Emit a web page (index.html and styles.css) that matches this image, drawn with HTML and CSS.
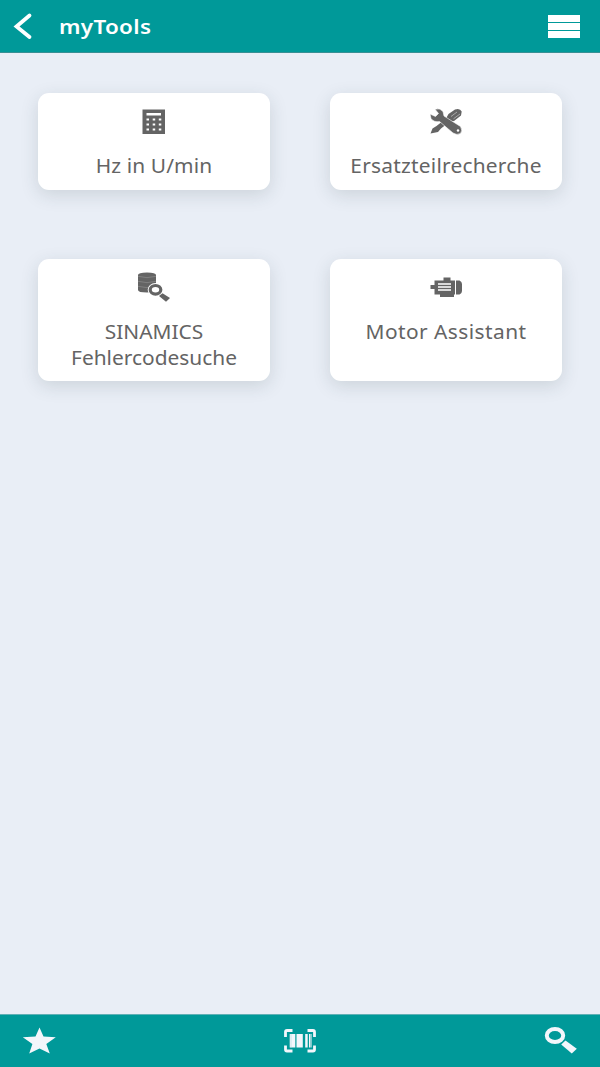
FILE: index.html
```
<!DOCTYPE html>
<html lang="de">
<head>
<meta charset="utf-8">
<title>myTools</title>
<link rel="stylesheet" href="styles.css">
</head>
<body>
<header class="topbar">
  <svg class="back" viewBox="0 0 20 28"><path d="M16.500 3.500 3.500 14.500 16.500 25"/></svg>
  <h1 class="title">myTools</h1>
  <div class="menu"><span class="line"></span><span class="line"></span><span class="line"></span></div>
</header>
<main class="tools">
  <section class="card">
    <svg class="icon" viewBox="0 0 34 32">
      <path fill-rule="evenodd" d="M5.500 4.500h22.500v24.500h-22.500zM9.500 8v2.500h14.500v-2.500zM9.500 13.500v2h2.500v-2zM15.700 13.500v2h2.500v-2zM21.800 13.500v2h2.500v-2zM9.500 18.500v2h2.500v-2zM15.700 18.500v2h2.500v-2zM21.800 18.500v2h2.500v-2zM9.500 23.500v2h2.500v-2zM15.700 23.500v2h2.500v-2zM21.800 23.500v2h2.500v-2z"/>
    </svg>
    <p class="label">Hz in U/min</p>
  </section>
  <section class="card">
    <svg class="icon" viewBox="0 0 34 32">
      <path d="M1.500 28.500 3.500 23.500 7.500 21 17 13.500 19.500 9 26 4.500Q31 2.800 32.700 6.500L32 10.500 25 16 21 16.500 12 23.500 9 27Z"/>
      <path class="cut" d="M22 11.500 28 7M24.500 13.800 31 9"/>
      <path class="edge" d="M6 4.200Q11 2.500 14 6.500L15 11 31.500 21.500Q34 25.500 31.500 28.500Q28 30.500 24 28L10.500 16.500Q5 17.500 2 13.500L1 9 6.500 11.500 9.500 8.500Z"/>
      <circle class="hole" cx="29" cy="25.500" r="1.200"/>
    </svg>
    <p class="label label-parts">Ersatzteilrecherche</p>
  </section>
  <section class="card card-tall">
    <svg class="icon" viewBox="0 0 34 32">
      <path d="M1 4Q1 1.500 10 1.500T19 4V19Q19 21.500 10 21.500T1 19Z"/>
      <path class="rings" d="M1 5.300Q10 8 19 5.300M1 10.300Q10 13 19 10.300M1 15.300Q10 18 19 15.300"/>
      <ellipse class="halo" cx="18.500" cy="18.800" rx="7.800" ry="6.800"/>
      <ellipse class="lens" cx="18.500" cy="18.800" rx="5.300" ry="4.300"/>
      <path d="m25.500 22.200 7.500 4.800-4 3.800-7-5.800z"/>
    </svg>
    <p class="label label-search">SINAMICS<br>Fehlercodesuche</p>
  </section>
  <section class="card card-tall">
    <svg class="icon" viewBox="0 0 34 32">
      <path d="M1.500 14h4V9.500h9V6.500h7v3H26v14h-1v2.500H11v-2.500H5.500V18h-4zM27 9.500h3.500Q33 10.500 33 13v7Q33 22.500 30.500 23.500H27z"/>
      <path class="fins" d="M9 13h13M9 16h13M9 19h13"/>
    </svg>
    <p class="label label-motor">Motor Assistant</p>
  </section>
</main>
<footer class="bottombar">
  <svg class="nav" viewBox="0 0 34 32"><path d="m17.500 2.500 4 9 12.300.7-9.500 6.900 3.500 9.400-10.300-5-10.300 5 3.200-9.400L.8 12.200l12.700-.7z"/></svg>
  <svg class="nav" viewBox="0 0 34 32">
    <path class="frame" d="M2.500 12V7Q2.500 5.500 4 5.500h5.500M24.500 5.500H30q1.500 0 1.500 1.500v5M2.500 20.500v4Q2.500 26 4 26h5.500M24.500 26H30q1.500 0 1.500-1.500v-4"/>
    <path d="M6.700 9h5.600v13.500H6.700zM13.500 9h6.300v13.500h-6.300zM22.200 9h2.500v13.500h-2.500zM26 9h1.600v13.500H26z"/>
    <path class="stripe" d="M8 9v13.500M28.500 9v13.500"/>
  </svg>
  <svg class="nav" viewBox="0 0 34 32"><ellipse class="ring" cx="11" cy="10.500" rx="8.200" ry="6.600"/><path d="m21.500 15.500 11.300 8.200-5 4.800-10.600-9z"/></svg>
</footer>
</body>
</html>
```
FILE: styles.css
```
* { box-sizing: border-box; }
body {
  margin: 0;
  height: 1067px;
  display: flex;
  flex-direction: column;
  background: #e9eef6;
  color: #646464;
  font-family: "Noto Sans", sans-serif;
  overflow: hidden;
}
.topbar {
  height: 53px;
  flex: none;
  display: flex;
  align-items: center;
  padding: 0 20.500px 0 13px;
  background: #009999;
  border-bottom: 1px solid #388f94;
  color: #fff;
}
.back {
  width: 20px;
  height: 28px;
  fill: none;
  stroke: #fff;
  stroke-width: 3.800;
  stroke-linecap: round;
}
.title {
  margin: 0 auto 0 25.500px;
  font-size: 20px;
  font-weight: 600;
  line-height: 28px;
  letter-spacing: .3px;
  transform: translateY(.5px) scaleX(1.12);
  transform-origin: left;
}
.menu {
  display: grid;
  gap: 1px;
  width: 32px;
}
.line {
  height: 7px;
  background: #fff;
}
.tools {
  flex: 1;
  display: grid;
  grid-template-columns: 232px 232px;
  column-gap: 60.500px;
  row-gap: 69px;
  align-content: start;
  padding: 40px 0 0 37.500px;
}
.card {
  height: 96.500px;
  padding-top: 12px;
  border-radius: 11px;
  background: #fff;
  box-shadow: 0 5px 18px rgba(40, 60, 70, .15);
  text-align: center;
}
.card-tall { height: 122.500px; }
.icon {
  display: block;
  width: 34px;
  height: 32px;
  margin: 0 auto;
  fill: #646464;
}
.label {
  margin: 16px 0 0;
  font-size: 19px;
  line-height: 26px;
  letter-spacing: .1px;
  white-space: nowrap;
  transform: scaleX(1.1);
}
.label-parts { letter-spacing: .2px; }
.label-search { letter-spacing: 0; }
.label-motor { letter-spacing: .4px; }
.cut { stroke: #aaa; stroke-width: 1; }
.edge { stroke: #fff; stroke-width: .6; }
.hole { fill: #fff; }
.rings { fill: none; stroke: #8c8c8c; stroke-width: .7; }
.halo { fill: #fff; }
.lens { fill: #fff; stroke: #646464; stroke-width: 3.200; }
.fins { stroke: #fff; stroke-width: 1.300; }
.bottombar {
  height: 53px;
  flex: none;
  display: flex;
  justify-content: space-between;
  align-items: center;
  padding: 0 22px;
  background: #009999;
  border-top: 1px solid #60b0b5;
}
.nav {
  width: 34px;
  height: 32px;
  fill: #f3f6fb;
}
.frame, .ring { fill: none; stroke: #f3f6fb; }
.frame { stroke-width: 2.800; }
.ring { stroke-width: 4; }
.stripe { stroke: #b8dce2; stroke-width: .7; }
```
